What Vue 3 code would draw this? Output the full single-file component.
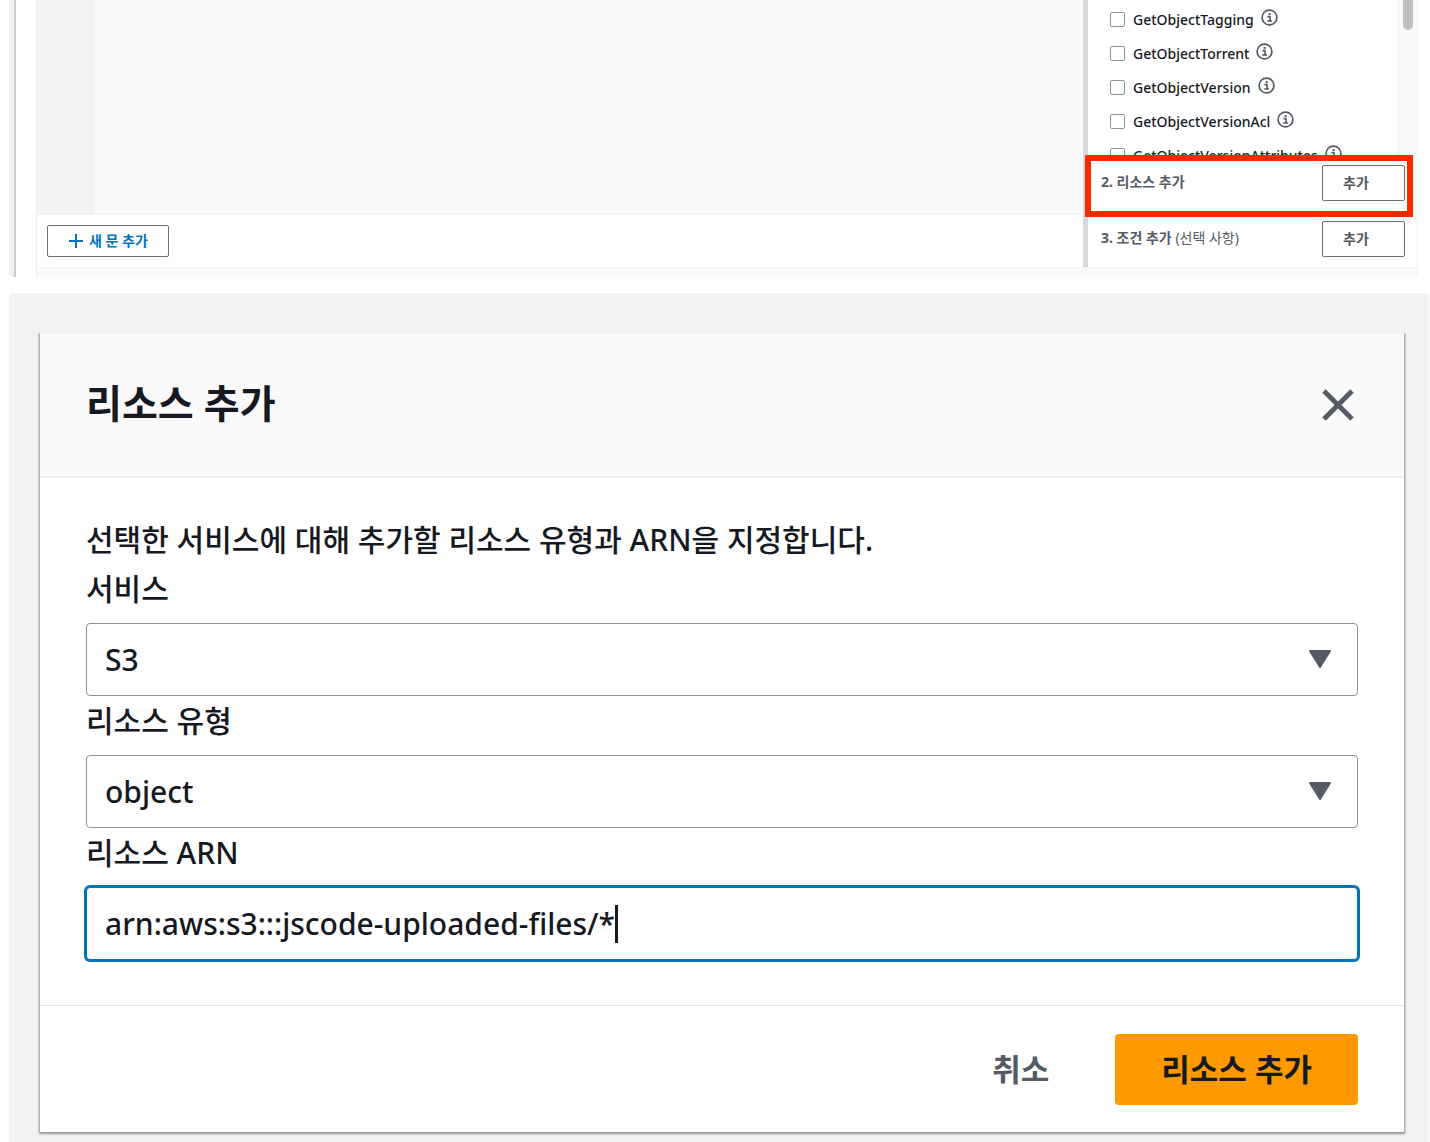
<script setup>
import { ref, onMounted, watch } from 'vue'

const actions = ref([
  { name: 'GetObjectTagging', checked: false },
  { name: 'GetObjectTorrent', checked: false },
  { name: 'GetObjectVersion', checked: false },
  { name: 'GetObjectVersionAcl', checked: false },
  { name: 'GetObjectVersionAttributes', checked: false },
])

const service = ref('S3')
const resourceType = ref('object')
const arn = ref('arn:aws:s3:::jscode-uploaded-files/*')

const arnInput = ref(null)
const caretLeft = ref(0)

function placeCaret() {
  const style = getComputedStyle(arnInput.value)
  const ctx = document.createElement('canvas').getContext('2d')
  ctx.font = `${style.fontWeight} ${style.fontSize} ${style.fontFamily}`
  caretLeft.value =
    Math.round(ctx.measureText(arn.value).width) +
    parseInt(style.paddingLeft) +
    parseInt(style.borderLeftWidth)
}

onMounted(placeCaret)
watch(arn, placeCaret)
</script>

<template>
  <main class="page">
    <section class="policy">
      <div class="rail"></div>
      <div class="workspace">
        <div class="columns">
          <div class="editor-column">
            <div class="editor"><div class="gutter"></div></div>
            <div class="editor-bar">
              <button type="button" class="btn add-statement">
                <svg width="16" height="16" viewBox="0 0 16 16" aria-hidden="true">
                  <path d="M8 1v14M1 8h14" fill="none" stroke="currentColor" stroke-width="2" />
                </svg>
                새 문 추가
              </button>
            </div>
          </div>
          <aside class="side">
            <div class="list-wrap">
              <ul class="actions">
                <li v-for="action in actions" :key="action.name">
                  <label>
                    <input v-model="action.checked" type="checkbox" />
                    <span>{{ action.name }}</span>
                  </label>
                  <svg class="info" width="17" height="17" viewBox="0 0 17 17" aria-hidden="true">
                    <circle cx="8.5" cy="8.5" r="7.4" fill="none" stroke="currentColor" stroke-width="1.7" />
                    <path d="M6.4 7.6h2.6v4M6.2 12h4.8" fill="none" stroke="currentColor" stroke-width="1.6" />
                    <rect x="7.6" y="4" width="2" height="2" fill="currentColor" />
                  </svg>
                </li>
              </ul>
              <div class="track"><div class="thumb"></div></div>
            </div>
            <div class="step highlighted">
              <span><b>2. 리소스 추가</b></span>
              <button type="button" class="btn step-btn">추가</button>
            </div>
            <div class="step">
              <span><b>3. 조건 추가</b> (선택 사항)</span>
              <button type="button" class="btn step-btn">추가</button>
            </div>
          </aside>
        </div>
        <div class="under"></div>
      </div>
    </section>

    <section class="backdrop">
      <form class="modal" role="dialog" aria-labelledby="modal-title" @submit.prevent>
        <header class="modal-head">
          <h2 id="modal-title">리소스 추가</h2>
          <button type="button" class="close" aria-label="닫기">
            <svg width="34" height="34" viewBox="0 0 34 34" aria-hidden="true">
              <path d="M3 3l28 28M31 3L3 31" fill="none" stroke="currentColor" stroke-width="4.8" />
            </svg>
          </button>
        </header>
        <div class="modal-body">
          <p>선택한 서비스에 대해 추가할 리소스 유형과 ARN을 지정합니다.</p>
          <label for="service">서비스</label>
          <div class="control">
            <select id="service" v-model="service">
              <option>S3</option>
            </select>
            <svg class="arrow" width="24" height="20" viewBox="0 0 24 20" aria-hidden="true">
              <path d="M2 2h20L12 18z" fill="currentColor" stroke="currentColor" stroke-width="2" stroke-linejoin="round" />
            </svg>
          </div>
          <label for="type">리소스 유형</label>
          <div class="control">
            <select id="type" v-model="resourceType">
              <option>object</option>
            </select>
            <svg class="arrow" width="24" height="20" viewBox="0 0 24 20" aria-hidden="true">
              <path d="M2 2h20L12 18z" fill="currentColor" stroke="currentColor" stroke-width="2" stroke-linejoin="round" />
            </svg>
          </div>
          <label for="arn">리소스 ARN</label>
          <div class="control">
            <input id="arn" ref="arnInput" v-model="arn" type="text" spellcheck="false" />
            <span class="caret" :style="{ left: caretLeft + 'px' }"></span>
          </div>
        </div>
        <footer class="modal-foot">
          <button type="button" class="cancel">취소</button>
          <button type="submit" class="submit">리소스 추가</button>
        </footer>
      </form>
    </section>
  </main>
</template>

<style>
body {
  background: #fff;
}
</style>

<style scoped>
.page,
.page * {
  box-sizing: border-box;
}
.page {
  font-family: "Noto Sans", "Noto Sans CJK KR", sans-serif;
  color: #16191f;
  padding-left: 9px;
}
button,
select,
input {
  font: inherit;
  color: inherit;
  margin: 0;
}

/* policy editor */
.policy {
  display: flex;
  margin-right: 12px;
  font-size: 14px;
  line-height: 20px;
}
.rail {
  width: 7px;
  margin-right: 20px;
  background: #f2f2f2;
  border-right: 2px solid #ccc;
  border-bottom-left-radius: 4px;
}
.workspace {
  flex: 1;
  min-width: 0;
  border-left: 1px solid #eaeded;
  border-right: 1px solid #f2f3f3;
}
.columns {
  display: flex;
}
.editor-column {
  flex: 1;
  display: flex;
  flex-direction: column;
}
.editor {
  flex: 1;
  display: flex;
  background: #f9f9f9;
}
.gutter {
  width: 58px;
  background: #f2f2f2;
}
.editor-bar {
  padding: 10px;
  border-top: 1px solid #f2f3f3;
}
.btn {
  background: #fff;
  border: 1px solid #687078;
  border-radius: 2px;
  font-weight: 700;
  cursor: pointer;
}
.add-statement {
  display: flex;
  align-items: center;
  gap: 5px;
  height: 32px;
  padding: 0 20px;
  color: #0073bb;
}
.side {
  width: 334px;
  border-left: 5px solid #d5dbdb;
}
.list-wrap {
  display: flex;
  height: 157px;
  margin-bottom: -2px;
  overflow: hidden;
}
.actions {
  flex: 1;
  list-style: none;
  margin: 0;
  padding: 3px 0 0 22px;
}
.actions li {
  display: flex;
  align-items: center;
  gap: 7px;
  height: 34px;
}
.actions label {
  display: flex;
  align-items: center;
  gap: 8px;
  font-weight: 500;
}
.actions input {
  appearance: none;
  width: 15px;
  height: 15px;
  margin-bottom: 2px;
  border: 1px solid #879596;
  border-radius: 2px;
  background: #fff;
}
.info {
  color: #545b64;
  margin-bottom: 5px;
}
.track {
  width: 19px;
  padding: 0 4px;
  background: #fafafa;
  border-left: 1px solid #eee;
}
.thumb {
  width: 10px;
  height: 30px;
  background: #c1c1c1;
  border-radius: 0 0 5px 5px;
}
.step {
  position: relative;
  display: flex;
  align-items: center;
  justify-content: space-between;
  padding: 10px 12px 10px 13px;
  color: #545b64;
}
.step span {
  padding-bottom: 3px;
}
.step-btn {
  width: 83px;
  height: 36px;
  padding: 0 20px;
  text-align: left;
}
.highlighted::after {
  content: "";
  position: absolute;
  inset: 0 4px -6px -3px;
  border: 6px solid #ff2600;
  pointer-events: none;
}
.under {
  height: 10px;
  background: #fafafa;
  border-top: 1px solid #f2f3f3;
}

/* dialog */
.backdrop {
  margin: 16px 1px 0 0;
  padding: 40px 25px 10px 31px;
  background: #f2f2f2;
  border-radius: 4px 4px 0 0;
}
.modal {
  background: #fff;
  box-shadow: 0 1px 2px 1px rgba(0, 0, 0, 0.4);
  clip-path: inset(0 -4px -5px -4px);
  font-size: 30px;
  font-weight: 500;
  line-height: 48px;
}
.modal-head {
  display: flex;
  align-items: center;
  justify-content: space-between;
  height: 145px;
  padding: 0 49px 0 46px;
  background: #fafafa;
  border-bottom: 2px solid #eee;
}
h2 {
  margin: 0;
  padding-bottom: 4px;
  font-size: 39px;
  line-height: 56px;
}
.close {
  display: flex;
  padding: 0;
  border: 0;
  background: none;
  color: #545b64;
}
.modal-body {
  padding: 38px 46px 45px;
}
p {
  margin: 0;
}
.modal-body label {
  display: block;
  margin-bottom: 9px;
  line-height: 50px;
}
.control {
  position: relative;
}
.control select,
.control input {
  appearance: none;
  display: block;
  width: 100%;
  height: 73px;
  padding: 0 18px;
  border: 1px solid #879596;
  border-radius: 4px;
  background: #fff;
}
.control input {
  border-color: #0073bb;
  box-shadow: 0 0 0 2px #0073bb;
  caret-color: transparent;
  outline: none;
}
.arrow {
  position: absolute;
  top: 26px;
  right: 26px;
  color: #545b64;
  pointer-events: none;
}
.caret {
  position: absolute;
  top: 18px;
  width: 3px;
  height: 38px;
  background: #16191f;
}
.modal-foot {
  display: flex;
  justify-content: flex-end;
  gap: 20px;
  padding: 28px 46px 27px;
  border-top: 1px solid #e5e7e7;
}
.modal-foot button {
  height: 71px;
  padding: 0 46px 2px;
  border: 0;
  border-radius: 4px;
  font-size: 31px;
  font-weight: 700;
}
.cancel {
  background: none;
  color: #545b64;
}
.submit {
  background: #ff9900;
}
</style>
